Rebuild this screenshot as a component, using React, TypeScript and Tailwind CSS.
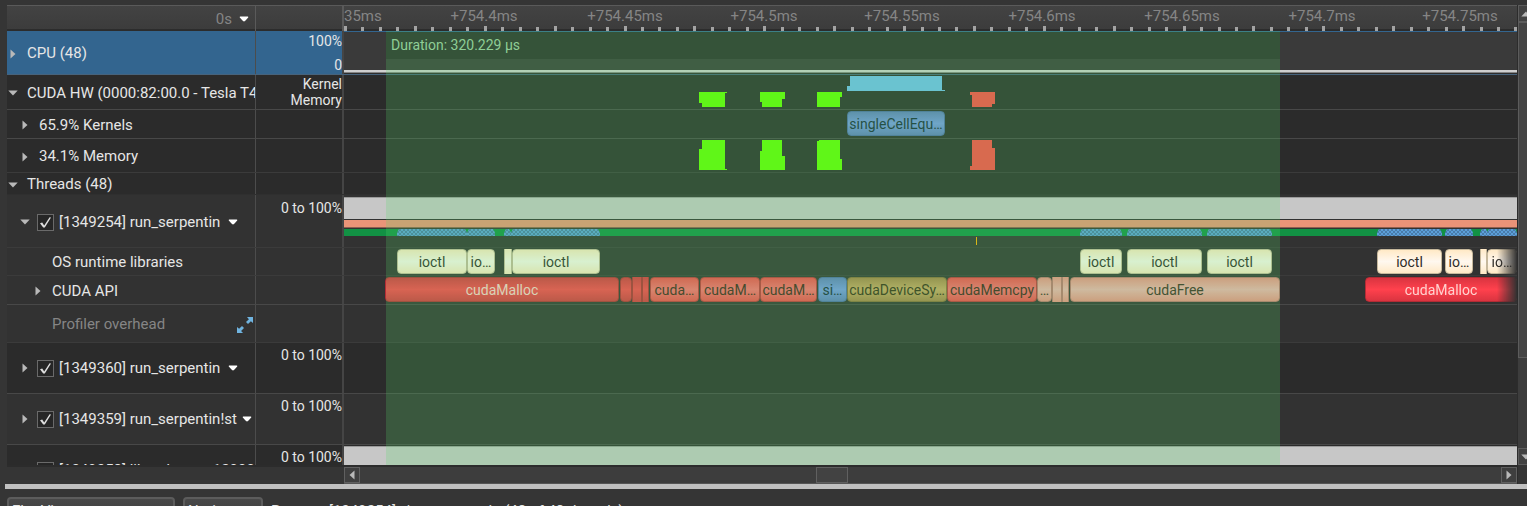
import type { ReactNode } from "react";

const SPAN = 1173;
const pct = (v: number) => `${(v / SPAN) * 100}%`;
const at = (x: number, w: number) => ({ left: pct(x), width: pct(w) });

type Mark = { x: number; w: number; label?: string; kind: keyof typeof KINDS; square?: boolean; fade?: boolean };

const KINDS = {
  ioctl: "border-[#c6b89c] bg-linear-to-b from-[#ffe9c6] via-[#fff8ef] via-50% to-[#ffe9c6] text-[#302c28]",
  malloc: "border-[#b32c35] bg-linear-to-b from-[#da3440] via-[#ff414d] via-50% to-[#da3440] text-[#ffd2cf]",
  memcpy: "border-[#c0353c] bg-linear-to-b from-[#f5494d] via-[#ff6c72] via-50% to-[#f5494d] text-[#41211c]",
  kernel: "border-[#4e6aa8] bg-linear-to-b from-[#617dbf] via-[#7797e5] via-50% to-[#617dbf] text-[#16293b]",
  sync: "border-[#8a6c3b] bg-linear-to-b from-[#a8824a] via-[#cca565] via-50% to-[#a8824a] text-[#382c17]",
  free: "border-[#bd7370] bg-linear-to-b from-[#ef8f86] via-[#f2b1b0] via-50% to-[#ef8f86] text-[#3e2b25]",
};

const ioctls: Mark[] = [
  { x: 53, w: 70, label: "ioctl", kind: "ioctl" },
  { x: 123, w: 28, label: "io…", kind: "ioctl" },
  { x: 160, w: 8, kind: "ioctl", square: true },
  { x: 168, w: 88, label: "ioctl", kind: "ioctl" },
  { x: 736, w: 42, label: "ioctl", kind: "ioctl" },
  { x: 783, w: 75, label: "ioctl", kind: "ioctl" },
  { x: 863, w: 65, label: "ioctl", kind: "ioctl" },
  { x: 1033, w: 65, label: "ioctl", kind: "ioctl" },
  { x: 1101, w: 28, label: "io…", kind: "ioctl" },
  { x: 1136, w: 7, kind: "ioctl", square: true },
  { x: 1143, w: 30, label: "io…", kind: "ioctl", fade: true },
];

const cudaCalls: Mark[] = [
  { x: 41, w: 234, label: "cudaMalloc", kind: "malloc" },
  { x: 276, w: 12, kind: "malloc" },
  { x: 288, w: 10, kind: "malloc", square: true },
  { x: 298, w: 7, kind: "malloc", square: true },
  { x: 306, w: 49, label: "cuda…", kind: "memcpy" },
  { x: 356, w: 60, label: "cudaM…", kind: "memcpy" },
  { x: 416, w: 57, label: "cudaM…", kind: "memcpy" },
  { x: 474, w: 29, label: "si…", kind: "kernel" },
  { x: 503, w: 100, label: "cudaDeviceSy…", kind: "sync" },
  { x: 603, w: 90, label: "cudaMemcpy", kind: "memcpy" },
  { x: 693, w: 15, label: "…", kind: "free" },
  { x: 708, w: 10, kind: "free", square: true },
  { x: 718, w: 7, kind: "free", square: true },
  { x: 726, w: 210, label: "cudaFree", kind: "free" },
  { x: 1021, w: 152, label: "cudaMalloc", kind: "malloc", fade: true },
];

const syscalls = [
  [53, 70], [123, 28], [160, 7], [167, 89], [736, 42], [783, 75], [863, 65], [1033, 65], [1101, 28], [1136, 8], [1143, 30],
];

const tickLabels = [
  { x: 140, t: "+754.4ms" },
  { x: 281, t: "+754.45ms" },
  { x: 420, t: "+754.5ms" },
  { x: 558, t: "+754.55ms" },
  { x: 698, t: "+754.6ms" },
  { x: 838, t: "+754.65ms" },
  { x: 978, t: "+754.7ms" },
  { x: 1116, t: "+754.75ms" },
];
const ticks = Array.from({ length: 68 }, (_, i) => i);

function Block({ m }: { m: Mark }) {
  return (
    <div
      style={at(m.x, m.w)}
      className={`absolute top-px flex h-[25px] items-center justify-center overflow-hidden border text-sm whitespace-nowrap ${
        m.square ? "rounded-none border-y-0" : "rounded"
      } ${m.fade ? "mask-r-from-[calc(100%-20px)] mask-r-to-100%" : ""} ${KINDS[m.kind]}`}
    >
      {m.label}
    </div>
  );
}

function Right() {
  return (
    <svg viewBox="0 0 6 10" className="h-[10px] w-[6px]" aria-hidden="true">
      <path d="M0.5 0.5 5.5 5 0.5 9.5Z" fill="#b9b9b9" />
    </svg>
  );
}
function Down() {
  return (
    <svg viewBox="0 0 10 6" className="h-[6px] w-[10px]" aria-hidden="true">
      <path d="M0.3 0.5H9.7L5 5.6Z" fill="#b9b9b9" />
    </svg>
  );
}
function MenuArrow() {
  return (
    <svg viewBox="0 0 10 6" className="h-[6px] w-[10px] shrink-0" aria-hidden="true">
      <path d="M1.2 0.5H8.8Q9.8 0.8 9 1.7L6 5Q5 5.8 4 5L1 1.7Q0.2 0.8 1.2 0.5Z" fill="#fff" />
    </svg>
  );
}
function Expander({ open, name }: { open?: boolean; name: string }) {
  return (
    <button type="button" aria-label={`Toggle ${name}`} aria-expanded={!!open} className="flex w-3 shrink-0 items-center justify-center">
      {open ? <Down /> : <Right />}
    </button>
  );
}

function Row({ size, tone, line, label, value, children }: {
  size: string; tone: string; line: string; label?: ReactNode; value?: ReactNode; children?: ReactNode;
}) {
  return (
    <div className={`grid shrink-0 grid-cols-[249px_88px_minmax(0,1fr)] overflow-hidden border-b ${size} ${tone} ${line}`}>
      <div className="flex min-w-0 items-center overflow-hidden border-r border-[#4c4c4c] pt-0.5 text-[15px] whitespace-nowrap text-[#e6e6e6]">{label}</div>
      <div className="border-r-2 border-[#454545] text-right text-sm/4 text-[#e6e6e6]">{value}</div>
      <div className="relative min-w-0 overflow-hidden">{children}</div>
    </div>
  );
}

function Thread({ id, name, open }: { id: string; name: string; open?: boolean }) {
  return (
    <div className={`flex items-center pl-3 ${open ? "" : "pb-0.5"}`}>
      <Expander open={open} name={id} />
      <label className="ml-1.5 flex items-center gap-[5px]">
        <span className="relative flex size-[17px]">
          <input type="checkbox" defaultChecked className="peer size-[17px] appearance-none border border-[#6a6a6a] bg-[#262626]" />
          <svg viewBox="0 0 17 17" className="pointer-events-none absolute inset-0 hidden peer-checked:block" aria-hidden="true">
            <path d="M3 9.2 5.2 8.6 7.2 11.4 12.6 3.2 14 3.4 7.8 13.6 6.2 13.6Z" fill="#dedede" />
          </svg>
        </span>
        <span>[{id}] {name}</span>
      </label>
      <button type="button" aria-label={`Options for ${id}`} className={name.length > 13 ? "ml-[3px] p-0.5" : "ml-1.5 p-0.5"}>
        <MenuArrow />
      </button>
    </div>
  );
}

function Utilization() {
  return <div className="h-full border-t border-[#9b9b9b] bg-[#c7c7c7]" />;
}

const DARK = "bg-[#2b2b2b]";
const MID = "bg-[#323232]";
const LINE = "border-[#484848]";
const SOFT = "border-[#3b3b3b]";

function Shapes({ tall }: { tall?: boolean }) {
  const green = "#64ff01";
  const red = "#ff4a48";
  return (
    <svg
      viewBox={tall ? "0 0 1173 33" : "0 0 1173 34"}
      preserveAspectRatio="none"
      className="absolute bottom-0 h-full w-full"
      shapeRendering="crispEdges"
      aria-hidden="true"
    >
      {tall ? (
        <>
          <path d="M358 1H381V30H383V31H355V10H358Z" fill={green} />
          <path d="M418 1H438V17H441V31H416V12H418Z" fill={green} />
          <path d="M475 1H496V20H498V31H473V2H475Z" fill={green} />
          <path d="M628 1H648V9H651V31H626V27H628Z" fill={red} />
        </>
      ) : (
        <>
          <path d="M506 1H598V15H601V16H503V11H506Z" fill="#70bdf0" />
          <path d="M355 17H383V18H381V32H358V28H355Z" fill={green} />
          <path d="M416 17H441V24H438V32H418V27H416Z" fill={green} />
          <path d="M473 17H498V22H496V32H473Z" fill={green} />
          <path d="M626 17H651V29H648V32H628V20H626Z" fill={red} />
        </>
      )}
    </svg>
  );
}

export default function App() {
  return (
    <div className="flex h-screen flex-col overflow-hidden bg-[#353535] font-[Roboto,sans-serif] text-[15px] text-[#e6e6e6]">
      <main className="flex min-h-0 flex-1 pt-[5px] pl-[7px]">
        <div className="flex min-w-0 flex-1 flex-col">
          <header className="grid h-[26px] shrink-0 grid-cols-[249px_88px_minmax(0,1fr)] border-t border-b-2 border-t-[#5a5a5a] border-b-[#2c2c2c] bg-linear-to-b from-[#434343] to-[#3c3c3c] text-[#858585]">
            <div className="flex items-center justify-end gap-[5px] border-r border-[#5a5a5a] pt-0.5 pr-1">
              <span>0s</span>
              <button type="button" aria-label="Time origin" className="p-0.5"><MenuArrow /></button>
            </div>
            <div className="border-r-2 border-[#5a5a5a]" />
            <div className="relative overflow-hidden">
              <span className="absolute top-0 left-0 leading-[21px]">35ms</span>
              {tickLabels.map((l) => (
                <span key={l.t} style={{ left: pct(l.x) }} className="absolute top-0 -translate-x-1/2 leading-[21px]">{l.t}</span>
              ))}
              {ticks.map((i) => (
                <span
                  key={i}
                  style={{ left: pct(Math.round(i * 17.47)) }}
                  className={`absolute bottom-0 w-[3px] bg-[#a3a3a3] ${i % 4 === 0 ? "h-[5px]" : "h-1"}`}
                />
              ))}
            </div>
          </header>

          <section className="relative flex min-h-0 flex-1 flex-col overflow-hidden">
            <Row size="h-11" tone="bg-[#33658f]" line="border-[#47637c]"
              label={<><Expander name="CPU" /><span className="ml-2">CPU (48)</span></>}
              value={<div className="flex h-full flex-col justify-between pt-0.5 pb-px"><span>100%</span><span>0</span></div>}>
              <div className="flex h-full flex-col border-t border-[#33658f] bg-[#3a3a3a]">
                <div style={{ marginLeft: pct(42), width: pct(894) }} className="h-[27px] bg-[#2b2b2b]" />
                <div className="mt-auto h-[3px] border-b border-[#858585] bg-[#cfcfcf]" />
                <div className="h-px bg-[#2e2e2e]" />
              </div>
            </Row>
            <Row size="h-[35px]" tone={DARK} line={LINE}
              label={<><Expander open name="CUDA HW" /><span className="ml-2">CUDA HW (0000:82:00.0 - Tesla T4)</span></>}
              value={<div className="pt-px"><div>Kernel</div><div>Memory</div></div>}>
              <Shapes />
            </Row>
            <Row size="h-[29px]" tone={DARK} line={LINE}
              label={<div className="flex items-center gap-2 pl-3"><Expander name="Kernels" /><span>65.9% Kernels</span></div>}>
              <Block m={{ x: 503, w: 98, label: "singleCellEqu…", kind: "kernel" }} />
            </Row>
            <Row size="h-[34px]" tone={DARK} line={SOFT}
              label={<div className="flex items-center gap-2 pl-3"><Expander name="Memory" /><span>34.1% Memory</span></div>}>
              <Shapes tall />
            </Row>
            <Row size="h-[22px]" tone={DARK} line="border-[#2f2f2f]"
              label={<><Expander open name="Threads" /><span className="ml-2">Threads (48)</span></>} />
            <Row size="h-[53px]" tone={MID} line={SOFT}
              label={<Thread open id="1349254" name="run_serpentin" />}
              value={<div className="pt-[5px]">0 to 100%</div>}>
              <div className="flex h-full flex-col pt-0.5">
                <div className="h-[22px]"><Utilization /></div>
                <div className="mt-px h-[7px] bg-[#ea9478]" />
                <div className="h-px bg-[#8c6050]" />
                <div className="relative mt-px h-[7px] bg-[#129144]">
                  {syscalls.map(([x, w]) => (
                    <div
                      key={x}
                      style={at(x, w)}
                      className="absolute inset-y-0 bg-[conic-gradient(#497cab_25%,#5c9fd9_0_50%,#497cab_0_75%,#5c9fd9_0)] bg-size-[4px_4px] [clip-path:polygon(0_50%,2px_0,calc(100%-2px)_0,100%_50%,100%_100%,0_100%)]"
                    />
                  ))}
                </div>
              </div>
              <div style={{ left: pct(632) }} className="absolute bottom-0.5 h-2 w-px bg-[#ffae00]" />
            </Row>
            <Row size="h-7" tone={MID} line={SOFT} label={<span className="pl-[45px]">OS runtime libraries</span>}>
              {ioctls.map((m) => <Block key={m.x} m={m} />)}
            </Row>
            <Row size="h-[29px]" tone={MID} line={LINE}
              label={<div className="flex items-center gap-2 pl-[25px]"><Expander name="CUDA API" /><span>CUDA API</span></div>}>
              {cudaCalls.map((m) => <Block key={m.x} m={m} />)}
            </Row>
            <Row size="h-[38px]" tone={MID} line={SOFT}
              label={
                <div className="flex w-full items-center justify-between pr-0.5 pl-[45px] text-[#858585]">
                  <span>Profiler overhead</span>
                  <button type="button" aria-label="Expand row">
                    <svg viewBox="0 0 16 16" className="size-4" aria-hidden="true">
                      <path d="M10 0H16V6L13.9 4.2 11 7.1 9 5.1 11.9 2.2ZM0 10 2.1 11.8 5 9 7 11 4.1 13.9 6 16H0Z" fill="#70b4e0" />
                    </svg>
                  </button>
                </div>
              } />
            <Row size="h-[51px]" tone={DARK} line={LINE} label={<Thread id="1349360" name="run_serpentin" />} value={<div className="pt-1">0 to 100%</div>} />
            <Row size="h-[51px]" tone={MID} line={LINE} label={<Thread id="1349359" name="run_serpentin!st" />} value={<div className="pt-1">0 to 100%</div>} />
            <Row size="h-[51px]" tone={DARK} line={LINE} label={<Thread id="1349358" name="libcudart.so.12000" />} value={<div className="pt-1">0 to 100%</div>}>
              <div className="h-6 pt-px"><Utilization /></div>
            </Row>

            <div className="pointer-events-none absolute inset-0 grid grid-cols-[337px_minmax(0,1fr)]">
              <div className="relative col-start-2">
                <div style={at(42, 894)} className="absolute inset-y-0 bg-[#56d868]/23">
                  <div className="px-[5px] pt-1 text-sm/5 text-[#8fce96]">Duration: 320.229 µs</div>
                </div>
              </div>
            </div>
          </section>

          <div className="grid h-[19px] shrink-0 grid-cols-[337px_minmax(0,1fr)] border-t-2 border-[#2c2c2c]">
            <div />
            <div className="flex justify-between border-b border-[#555] bg-[#3d3d3d]">
              <button type="button" aria-label="Scroll left" className="flex w-4 items-center justify-center border border-[#606060] bg-[#3f3f3f]">
                <span className="rotate-180"><Right /></span>
              </button>
              <div className="relative flex-1">
                <div style={{ left: "40%" }} className="absolute inset-y-0 w-8 border border-[#606060] bg-[#424242]" />
              </div>
              <button type="button" aria-label="Scroll right" className="flex w-4 items-center justify-center border border-[#606060] bg-[#3f3f3f]">
                <Right />
              </button>
            </div>
          </div>
        </div>

        <div className="flex w-2.5 shrink-0 flex-col overflow-hidden border-l border-[#2c2c2c] pb-[19px]">
          <button type="button" aria-label="Scroll up" className="flex h-[17px] w-4 shrink-0 items-center justify-center border border-[#5c5c5c] bg-[#424242]">
            <span className="rotate-180"><Down /></span>
          </button>
          <div className="flex w-4 flex-1 flex-col bg-[#3d3d3d]">
            <div className="h-[336px] border border-[#5c5c5c] bg-[#444]" />
          </div>
          <button type="button" aria-label="Scroll down" className="flex h-[17px] w-4 shrink-0 items-center justify-center border border-[#5c5c5c] bg-[#424242]">
            <Down />
          </button>
        </div>
      </main>

      <div className="ml-[5px] h-[5px] shrink-0 bg-[#c0c0c0]" />

      <footer className="flex h-[17px] shrink-0 items-start gap-2 overflow-hidden pt-2 pl-[7px]">
        <button type="button" className="h-6 w-[168px] shrink-0 rounded-t-sm border-2 border-[#5c5c5c] bg-linear-to-b from-[#484848] to-[#404040] px-[3px] text-left text-[15px]/6">Flat View</button>
        <button type="button" className="h-6 w-20 shrink-0 rounded-t-sm border-2 border-[#5c5c5c] bg-linear-to-b from-[#484848] to-[#404040] px-[3px] text-left text-[15px]/6">Notions</button>
        <span className="leading-7">Process [1349254] ./run_serpentin (48 of 48 threads)</span>
      </footer>
    </div>
  );
}
